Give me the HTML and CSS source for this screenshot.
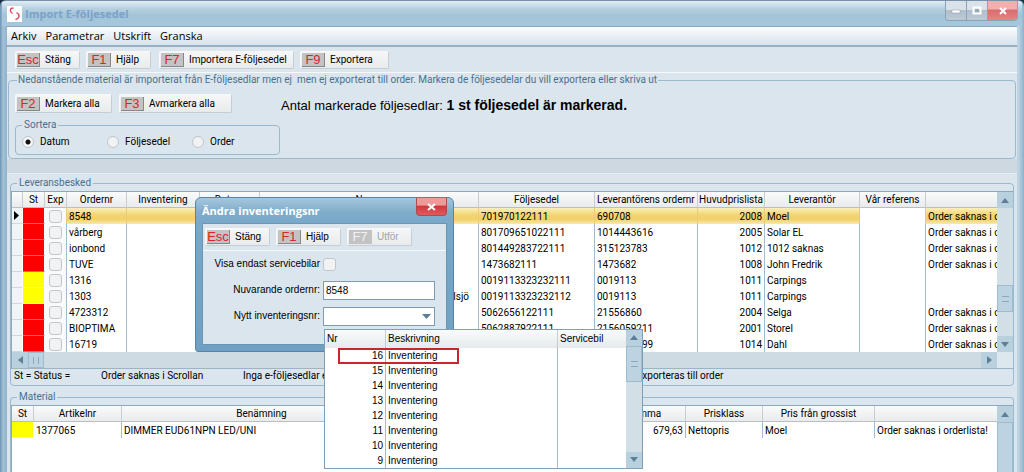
FILE: index.html
```html
<!DOCTYPE html>
<html lang="sv">
<head>
<meta charset="utf-8">
<title>Import E-följesedel</title>
<link rel="stylesheet" href="styles.css">
</head>
<body>
<div class="window">
  <header class="titlebar">
    <svg class="logo" viewBox="0 0 15 16" aria-hidden="true"><rect width="15" height="16" fill="#fff"/><path d="M6.500 2C3 2 2 5 5.500 7.500M9.500 6.500C13.500 8.500 12.500 12.500 8.500 13.500" fill="none" stroke="#d4455c" stroke-width="1.300"/></svg>
    <h1 class="title">Import E-följesedel</h1>
    <div class="caption">
      <button class="cap-btn" aria-label="Minimera"><svg viewBox="0 0 12 12"><rect x="2" y="5" width="8" height="3" fill="#fff" stroke="#8799a8" stroke-width=".5"/></svg></button>
      <button class="cap-btn" aria-label="Maximera"><svg viewBox="0 0 12 12"><rect x="2.500" y="2.500" width="7" height="6" fill="none" stroke="#fff" stroke-width="2"/><rect x="4" y="4" width="4" height="3" fill="#9aabb8"/></svg></button>
      <button class="cap-btn cap-close" aria-label="Stäng"><svg viewBox="0 0 12 12"><path d="M3 3l6 6M9 3l-6 6" stroke="#fff" stroke-width="2"/></svg></button>
    </div>
  </header>

  <div class="client">
    <nav class="menubar">
      <button class="menu">Arkiv</button>
      <button class="menu">Parametrar</button>
      <button class="menu">Utskrift</button>
      <button class="menu">Granska</button>
    </nav>

    <div class="toolbar">
      <button class="btn"><kbd>Esc</kbd>Stäng</button>
      <button class="btn"><kbd>F1</kbd>Hjälp</button>
      <button class="btn btn-split btn-xl"><kbd>F7</kbd>Importera E-följesedel</button>
      <button class="btn btn-sm"><kbd>F9</kbd>Exportera</button>
    </div>

    <fieldset class="group select-group">
      <legend>Nedanstående material är importerat från E-följesedlar men ej&nbsp; men ej exporterat till order. Markera de följesedelar du vill exportera eller skriva ut</legend>
      <div class="mark-row">
        <button class="btn btn-md"><kbd>F2</kbd>Markera alla</button>
        <button class="btn btn-lg"><kbd>F3</kbd>Avmarkera alla</button>
        <p class="count">Antal markerade följesedlar: <strong>1 st följesedel är markerad.</strong></p>
      </div>
      <fieldset class="group sort">
        <legend>Sortera</legend>
        <div class="radios">
          <label><input type="radio" name="sort" checked>Datum</label>
          <label><input type="radio" name="sort">Följesedel</label>
          <label><input type="radio" name="sort">Order</label>
        </div>
      </fieldset>
    </fieldset>

    <div class="splitter"></div>

    <fieldset class="group list-group">
      <legend>Leveransbesked</legend>
      <div class="grid-box">
        <div class="grid-main">
          <table class="grid">
            <colgroup><col class="w-mark"><col class="w-st"><col class="w-st"><col class="w-order"><col class="w-inv"><col class="w-date"><col><col class="w-slip"><col class="w-lev"><col class="w-list"><col class="w-supp"><col class="w-ref"><col class="w-note"></colgroup>
            <thead>
              <tr><th></th><th>St</th><th class="tight">Exp</th><th>Ordernr</th><th>Inventering</th><th>Datum</th><th>Namn</th><th>Följesedel</th><th class="left">Leverantörens ordernr</th><th class="tight">Huvudprislista</th><th>Leverantör</th><th>Vår referens</th><th></th></tr>
            </thead>
            <tbody>
              <tr class="selected"><td class="mark"><svg viewBox="0 0 5 9"><path d="M0 0l5 4.500L0 9z"/></svg></td><td class="red"></td><td class="tick"><input type="checkbox" aria-label="Exportera 8548"></td><td>8548</td><td></td><td></td><td></td><td>701970122111</td><td>690708</td><td class="num">2008</td><td>Moel</td><td class="ref"></td><td>Order saknas i orderlista!</td></tr>
              <tr><td class="mark"></td><td class="red"></td><td class="tick"><input type="checkbox" aria-label="Exportera vårberg"></td><td>vårberg</td><td></td><td></td><td></td><td>801709651022111</td><td>1014443616</td><td class="num">2005</td><td>Solar EL</td><td></td><td>Order saknas i orderlista!</td></tr>
              <tr><td class="mark"></td><td class="red"></td><td class="tick"><input type="checkbox" aria-label="Exportera ionbond"></td><td>ionbond</td><td></td><td></td><td></td><td>801449283722111</td><td>315123783</td><td class="num">1012</td><td>1012 saknas</td><td></td><td>Order saknas i orderlista!</td></tr>
              <tr><td class="mark"></td><td class="red"></td><td class="tick"><input type="checkbox" aria-label="Exportera TUVE"></td><td>TUVE</td><td></td><td></td><td></td><td>1473682111</td><td>1473682</td><td class="num">1008</td><td>John Fredrik</td><td></td><td>Order saknas i orderlista!</td></tr>
              <tr><td class="mark"></td><td class="yellow"></td><td class="tick"><input type="checkbox" aria-label="Exportera 1316"></td><td>1316</td><td></td><td></td><td></td><td>0019113323232111</td><td>0019113</td><td class="num">1011</td><td>Carpings</td><td></td><td></td></tr>
              <tr><td class="mark"></td><td class="yellow"></td><td class="tick"><input type="checkbox" aria-label="Exportera 1303"></td><td>1303</td><td></td><td></td><td class="place">elsjö</td><td>0019113323232112</td><td>0019113</td><td class="num">1011</td><td>Carpings</td><td></td><td></td></tr>
              <tr><td class="mark"></td><td class="red"></td><td class="tick"><input type="checkbox" aria-label="Exportera 4723312"></td><td>4723312</td><td></td><td></td><td></td><td>5062656122111</td><td>21556860</td><td class="num">2004</td><td>Selga</td><td></td><td>Order saknas i orderlista!</td></tr>
              <tr><td class="mark"></td><td class="red"></td><td class="tick"><input type="checkbox" aria-label="Exportera BIOPTIMA"></td><td>BIOPTIMA</td><td></td><td></td><td></td><td>5062887922111</td><td>2156059211</td><td class="num">2001</td><td>Storel</td><td></td><td>Order saknas i orderlista!</td></tr>
              <tr><td class="mark"></td><td class="red"></td><td class="tick"><input type="checkbox" aria-label="Exportera 16719"></td><td>16719</td><td></td><td></td><td></td><td></td><td>2156059199</td><td class="num">1014</td><td>Dahl</td><td></td><td>Order saknas i orderlista!</td></tr>
            </tbody>
          </table>
          <div class="vscroll">
            <span class="arrow"><svg viewBox="0 0 8 5"><path d="M0 5l4-5 4 5z"/></svg></span>
            <span class="track"></span>
            <span class="thumb"></span>
            <span class="track track-short"></span>
            <span class="arrow"><svg viewBox="0 0 8 5"><path d="M0 0l4 5 4-5z"/></svg></span>
          </div>
        </div>
        <div class="hscroll">
          <span class="arrow"><svg class="side" viewBox="0 0 5 8"><path d="M5 0L0 4l5 4z"/></svg></span>
          <span class="thumb"></span>
          <span class="track"></span>
          <span class="arrow"><svg class="side" viewBox="0 0 5 8"><path d="M0 0l5 4-5 4z"/></svg></span>
          <span class="corner"></span>
        </div>
      </div>
      <div class="status">
        <span class="s-key">St = Status =</span>
        <span class="s-missing">Order saknas i Scrollan</span>
        <span class="s-none">Inga e-följesedlar exporteras</span>
        <span>exporteras till order</span>
      </div>
    </fieldset>

    <fieldset class="group list-group material">
      <legend>Material</legend>
      <div class="grid-box">
        <div class="grid-main">
          <table class="grid">
            <colgroup><col class="w-st"><col class="w-art"><col class="w-name"><col><col class="w-sum"><col class="w-class"><col class="w-price"><col class="w-last"></colgroup>
            <thead><tr><th>St</th><th>Artikelnr</th><th>Benämning</th><th></th><th>Summa</th><th>Prisklass</th><th>Pris från grossist</th><th></th></tr></thead>
            <tbody><tr><td class="yellow"></td><td>1377065</td><td>DIMMER EUD61NPN LED/UNI</td><td></td><td class="num">679,63</td><td>Nettopris</td><td>Moel</td><td>Order saknas i orderlista!</td></tr></tbody>
          </table>
          <div class="vscroll">
            <span class="arrow"><svg viewBox="0 0 8 5"><path d="M0 5l4-5 4 5z"/></svg></span>
            <span class="thumb thumb-full"></span>
          </div>
        </div>
      </div>
    </fieldset>
  </div>

  <section class="dialog" role="dialog" aria-labelledby="dlg-title">
    <header class="dlg-head">
      <h2 class="dlg-title" id="dlg-title">Ändra inventeringsnr</h2>
      <button class="dlg-close" aria-label="Stäng"><svg viewBox="0 0 12 12"><path d="M2 3l7 6M9 3l-7 6" stroke="#fff" stroke-width="2"/></svg></button>
    </header>
    <div class="dlg-body">
      <div class="toolbar dlg-tools">
        <button class="btn"><kbd>Esc</kbd>Stäng</button>
        <button class="btn"><kbd>F1</kbd>Hjälp</button>
        <button class="btn" disabled><kbd>F7</kbd>Utför</button>
      </div>
      <form class="form">
        <label for="only">Visa endast servicebilar</label>
        <input type="checkbox" id="only">
        <label for="current">Nuvarande ordernr:</label>
        <input type="text" class="field" id="current" value="8548">
        <label for="next">Nytt inventeringsnr:</label>
        <div class="combo">
          <select class="field" id="next"><option></option><option>16</option><option>15</option></select>
          <svg class="combo-arrow" viewBox="0 0 9 5"><path d="M0 0h9L4.500 5z"/></svg>
          <div class="dropdown">
            <table class="choices">
              <colgroup><col class="w-nr"><col><col class="w-car"></colgroup>
              <thead><tr><th>Nr</th><th>Beskrivning</th><th>Servicebil</th></tr></thead>
              <tbody>
                <tr><td class="num"><span class="highlight"></span>16</td><td>Inventering</td><td></td></tr>
                <tr><td class="num">15</td><td>Inventering</td><td></td></tr>
                <tr><td class="num">14</td><td>Inventering</td><td></td></tr>
                <tr><td class="num">13</td><td>Inventering</td><td></td></tr>
                <tr><td class="num">12</td><td>Inventering</td><td></td></tr>
                <tr><td class="num">11</td><td>Inventering</td><td></td></tr>
                <tr><td class="num">10</td><td>Inventering</td><td></td></tr>
                <tr><td class="num">9</td><td>Inventering</td><td></td></tr>
              </tbody>
            </table>
            <div class="vscroll">
              <span class="arrow"><svg viewBox="0 0 8 5"><path d="M0 5l4-5 4 5z"/></svg></span>
              <span class="thumb thumb-tall"></span>
              <span class="track"></span>
              <span class="arrow"><svg viewBox="0 0 8 5"><path d="M0 0l4 5 4-5z"/></svg></span>
            </div>
          </div>
        </div>
      </form>
    </div>
  </section>
</div>
</body>
</html>
```
FILE: styles.css
```css
* { box-sizing: border-box; }

body {
  margin: 0;
  background: #1c2f45;
  color: #000;
  font: 10px/14px Roboto, "Liberation Sans", sans-serif;
}

button, input, select { font: inherit; color: inherit; margin: 0; }
h1, h2, p { margin: 0; }
svg { display: block; }

.window {
  position: relative;
  display: flex;
  flex-direction: column;
  min-height: 100vh;
  padding: 0 7px;
  overflow: hidden;
  border-top: 1px solid #7891ab;
  border-radius: 6px 6px 0 0;
  background: linear-gradient(90deg, #6c94b3 0, #a4c2d7 3px, #8fb2cb 7px, #a4c5d9 8px, #a4c5d9 calc(100% - 8px), #c2d7e5 calc(100% - 6px), #8fb1cb 100%);
}

.titlebar {
  display: flex;
  align-items: flex-start;
  height: 25px;
  margin: 0 -5px;
  padding-left: 5px;
  background: linear-gradient(#e2edf5, #b5cfe0 8px, #a3c4d8 14px, #a6c7dc);
}
.logo { width: 15px; height: 16px; margin-top: 5px; }
.title { flex: 1; margin: 5px 0 0 3px; font: bold 11px/15px "Open Sans", sans-serif; color: #7ba2c9; }
.caption { display: flex; margin-right: 4px; border: 1px solid #8ba3b6; border-top: 0; border-radius: 0 0 4px 4px; overflow: hidden; }
.cap-btn {
  display: flex; align-items: center; justify-content: center;
  width: 21px; height: 19px; padding: 0;
  border: 0; border-right: 1px solid #8ba3b6;
  background: linear-gradient(#d9e2e9 45%, #b0bfcb 50%, #bccbd6);
}
.cap-btn svg { width: 12px; height: 12px; }
.cap-close { width: 29px; border-right: 0; background: linear-gradient(#f0b0b0 40%, #d96d70 50%, #e58583); }

.client { display: flex; flex: 1; flex-direction: column; border-top: 1px solid #86a6be; background: #dae5ed; }

.menubar { display: flex; gap: 9px; height: 20px; padding: 0 4px; border-bottom: 2px solid #94b1c8; background: linear-gradient(#fbfdfe, #edf2f6 40%, #d8e3ec); }
.menu { padding: 0; border: 0; background: none; font: 11px/16px "Open Sans", sans-serif; color: #000; }

.toolbar { display: flex; gap: 6px; padding: 4px 8px 3px; border-bottom: 1px solid #f6fafc; }
.btn {
  display: flex; align-items: center; gap: 5px;
  min-width: 65px; height: 18px; padding: 0 4px 0 1px;
  border: 1px solid; border-color: #f8f8f8 #c6ced4 #c6ced4 #f8f8f8; border-radius: 2px;
  background: linear-gradient(#f6f6f6, #e8ebed);
  white-space: nowrap;
}
.btn-split { margin-left: 2px; }
.btn-sm { min-width: 89px; }
.btn-md { min-width: 97px; }
.btn-lg { min-width: 113px; }
.btn-xl { min-width: 135px; }
kbd {
  min-width: 23px; height: 14px;
  border-right: 1px solid #888; border-bottom: 1px solid #888;
  background: #c3c3c3; color: #dc2430; text-align: center;
  font: 13px/13px "Liberation Sans", sans-serif;
}

.group { min-width: 0; margin: 0; padding: 0; border: 1px solid #9cb9cd; border-radius: 4px; }
.group > legend { margin-left: 6px; padding: 0 2px; color: #4b708c; }

.select-group { margin: 0 1px; padding: 7px 6px 3px; }
.group.select-group > legend { margin-left: 2px; padding: 0 1px; }
.mark-row { display: flex; gap: 7px; height: 19px; }
.mark-row .btn { height: 19px; }
.count { margin-left: 42px; font: 13px/22px "Liberation Sans", sans-serif; }
.count strong { font-size: 14px; }
.sort { width: 265px; margin-top: 5px; }
.radios { display: grid; grid-template-columns: 85px 85px 1fr; padding: 3px 6px 5px; }
.radios label { display: flex; align-items: center; gap: 6px; }

input[type="radio"], input[type="checkbox"] {
  appearance: none; width: 12px; height: 12px;
  border: 1px solid #c0c6cb; background: #f1f2f3;
}
input[type="radio"] { border-radius: 50%; }
input[type="radio"]:checked { background: radial-gradient(circle, #111 0 2px, #f4f5f6 3px); }
input[type="checkbox"] { width: 13px; height: 13px; border-radius: 3px; }

.splitter { height: 15px; border-bottom: 1px solid #e6edf2; background: #cdd8e1; }

.list-group { margin: 2px 3px 0; padding-top: 1px; }
.grid-box { display: flex; flex-direction: column; border-top: 1px solid #8ba8bd; border-left: 1px solid #8ba8bd; background: #fff; }
.grid-main { display: flex; flex: 1; align-items: flex-start; }
.grid-main > .vscroll { align-self: stretch; }

.grid { flex: 1; width: 0; table-layout: fixed; border-collapse: separate; border-spacing: 0; }
.grid th, .grid td { height: 16px; padding: 0 2px; overflow: hidden; border-right: 1px solid #a3bccd; text-align: left; white-space: nowrap; line-height: 15px; }
.grid th { border-color: #c8cdd0; border-bottom: 1px solid #b9bfc3; background: linear-gradient(#fafbfb, #e9ebec); font-weight: normal; text-align: center; }
.grid th.left { text-align: left; }
.grid th.tight { padding: 0; }
.grid td:last-child, .grid th:last-child { border-right: 0; text-overflow: clip; }
.grid .num, .choices .num { text-align: right; }
.grid .place { padding-right: 9px; text-align: right; }
.grid td.red { border-color: #fff; border-bottom: 1px solid #ff5c5c; background: #f00; }
.grid td.yellow { border-color: #fff; border-bottom: 1px solid #ffff7a; background: #ff0; }
.grid td.mark { border-color: #fff; border-bottom: 1px solid #d5d8da; background: #f2f3f4; }
.mark svg { width: 5px; height: 9px; }
.grid td.tick { padding: 0; text-align: center; background: #fafafa; }
.tick input { display: block; margin: 0 auto; }
.selected td { background: linear-gradient(#fbeec0, #f3d774 40%, #f0d06a 70%, #fae9ac); border-right-color: #e9cd74; }
.grid .selected td.ref { background: #fff; }

.w-mark { width: 11px; }
.w-st { width: 22px; }
.w-order { width: 60px; }
.w-inv { width: 73px; }
.w-date { width: 60px; }
.w-slip { width: 116px; }
.w-lev { width: 103px; }
.w-list { width: 67px; }
.w-supp { width: 95px; }
.w-ref { width: 66px; }
.w-note { width: 71px; }
.w-art { width: 88px; }
.w-name { width: 280px; }
.w-sum { width: 83px; }
.w-class { width: 77px; }
.w-price { width: 112px; }
.w-last { width: 122px; }

.vscroll { display: flex; flex-direction: column; width: 16px; }
.hscroll { display: flex; height: 17px; border-bottom: 1px solid #9cb4c5; }
.arrow { display: flex; flex: none; align-items: center; justify-content: center; width: 16px; height: 16px; background: #b9d0df; fill: #5d7f98; }
.arrow svg { width: 8px; height: 5px; }
.arrow svg.side { width: 5px; height: 8px; }
.track { flex: 1; background: #d3dfe6; }
.track-short { flex: none; height: 24px; }
.thumb { display: flex; align-items: center; justify-content: center; flex: none; height: 27px; border: 1px solid #9fbbce; background: #bdd3e1; }
.thumb::before { content: ""; width: 7px; height: 4px; border: solid #8ba9be; border-width: 1px 0; }
.hscroll .thumb { width: 16px; height: 16px; }
.hscroll .thumb::before { width: 4px; height: 7px; border-width: 0 1px; }
.hscroll .track { background: #cfdbe2; }
.thumb-full { flex: 1; border-bottom: 0; }
.thumb-full::before { display: none; }
.thumb-tall { height: 36px; }
.corner { width: 16px; background: #dce7ee; }

.status { display: flex; height: 16px; padding-left: 3px; }
.s-key { width: 87px; }
.s-missing { width: 142px; }
.s-none { width: 394px; }

.material { display: flex; flex: 1; flex-direction: column; margin-top: 4px; min-height: 83px; border-bottom: 0; border-radius: 4px 4px 0 0; }
.material .grid-box { flex: 1; min-height: 67px; height: 100%; }
.material .grid-main { align-items: stretch; }
.material .grid { align-self: flex-start; }

.dialog {
  position: absolute; left: 195px; top: 196px; width: 259px;
  padding: 0 6px 6px;
  border: 1px solid #5585aa; border-radius: 6px 6px 3px 3px;
  background: linear-gradient(#a6c6dc, #7fadcb 14px, #79a9c9 24px, #6f9fc2);
  font: 10px/14px "Liberation Sans", sans-serif;
}
.dlg-head { display: flex; justify-content: space-between; height: 25px; }
.dlg-title { font: bold 11px/26px "Open Sans", sans-serif; color: #fff; }
.dlg-close { display: flex; align-items: center; justify-content: center; width: 31px; height: 18px; padding: 0; border: 1px solid #b04a50; border-top: 0; border-radius: 0 0 4px 4px; background: linear-gradient(#ee9a98 40%, #d2383f 50%, #e05a5c); }
.dlg-close svg { width: 12px; height: 12px; }
.dlg-body { border: 1px solid #6a96b6; background: #dae5ed; }
.dlg-tools { padding: 4px 2px; }
.dlg-tools .btn:disabled { color: #a2a5a7; }
.btn:disabled kbd { color: #f2f2f2; border-color: #c3c3c3; }
.form { display: grid; grid-template-columns: 117px 112px; grid-auto-rows: 18px; gap: 8px 3px; align-items: center; padding: 4px 0 19px; }
.form > label { text-align: right; white-space: nowrap; }
.field { display: block; width: 100%; height: 19px; padding: 0 2px; border: 1px solid #7d9db6; border-radius: 0; background: #fff; appearance: none; }
.combo { position: relative; }
.combo-arrow { position: absolute; right: 4px; top: 7px; width: 9px; height: 5px; fill: #5f7f97; }

.dropdown { position: absolute; left: 1px; top: 22px; display: flex; width: 319px; border: 1px solid #7f9fb8; background: #fff; }
.choices { flex: 1; table-layout: fixed; border-spacing: 0; }
.choices th { height: 18px; padding: 0 2px; border-right: 1px solid #c8cdd0; background: linear-gradient(#fafbfb, #e6eaec); font-weight: normal; text-align: left; line-height: 16px; }
.choices td { position: relative; height: 15px; padding: 0 2px; border-right: 1px solid #a3bccd; line-height: 15px; }
.choices td:last-child, .choices th:last-child { border-right: 0; }
.w-nr { width: 61px; }
.w-car { width: 68px; }
.highlight { position: absolute; left: 13px; top: 0; width: 121px; height: 16px; border: 2px solid #c8252c; z-index: 1; }
```
